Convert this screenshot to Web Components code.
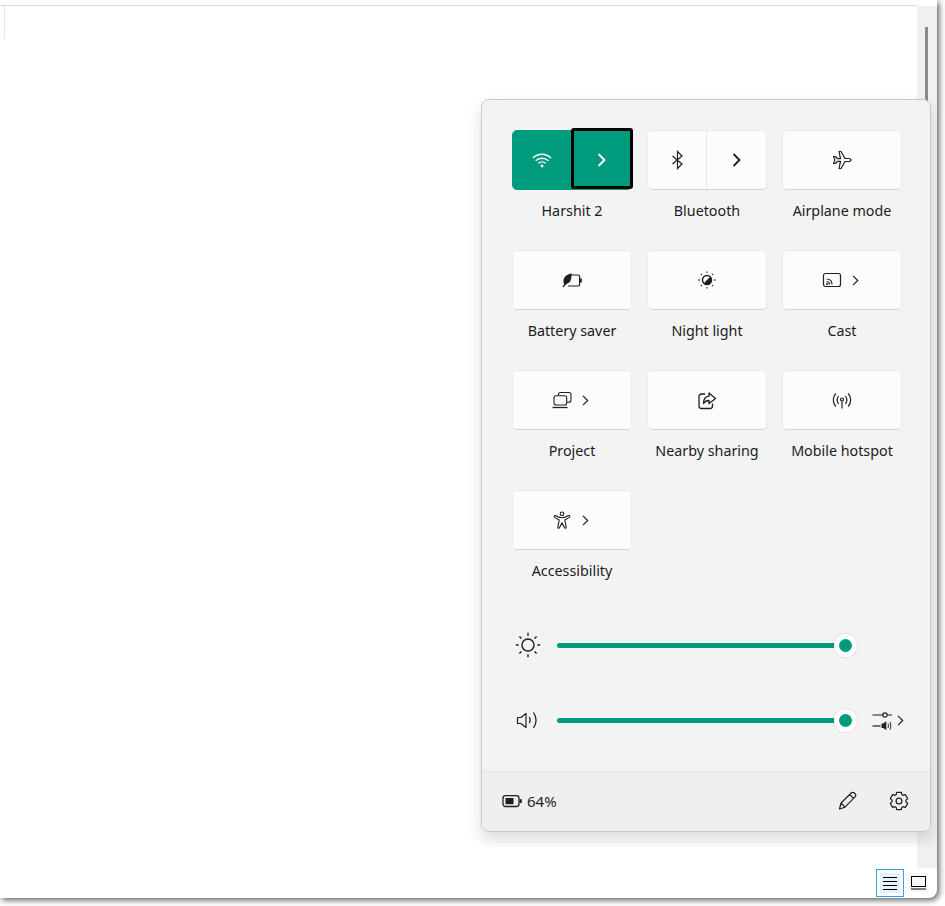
<!DOCTYPE html>
<html>
<head>
<meta charset="utf-8">
<title>Quick settings</title>
<style>
  html, body { margin: 0; height: 100%; background: #fff; overflow: hidden; }
  body { font-family: "Noto Sans", "Open Sans", sans-serif; color: #1b1b1b; }
</style>
</head>
<body>
<doc-window>
  <quick-settings>
    <qs-tile label="Harshit 2" active split focus><qs-icon name="wifi"></qs-icon></qs-tile>
    <qs-tile label="Bluetooth" split><qs-icon name="bluetooth"></qs-icon></qs-tile>
    <qs-tile label="Airplane mode"><qs-icon name="plane"></qs-icon></qs-tile>
    <qs-tile label="Battery saver"><qs-icon name="saver"></qs-icon></qs-tile>
    <qs-tile label="Night light"><qs-icon name="night"></qs-icon></qs-tile>
    <qs-tile label="Cast" more><qs-icon name="cast"></qs-icon></qs-tile>
    <qs-tile label="Project" more><qs-icon name="project"></qs-icon></qs-tile>
    <qs-tile label="Nearby sharing"><qs-icon name="share"></qs-icon></qs-tile>
    <qs-tile label="Mobile hotspot"><qs-icon name="hotspot"></qs-icon></qs-tile>
    <qs-tile label="Accessibility" more><qs-icon name="access"></qs-icon></qs-tile>
    <qs-slider slot="sliders"><qs-icon name="sun" size="26" box="24"></qs-icon></qs-slider>
    <qs-slider slot="sliders" mixer><qs-icon name="volume" size="24" box="24"></qs-icon></qs-slider>
  </quick-settings>
</doc-window>

<script>
// Engranaje de 6 dientes calculado en coordenadas polares
function gearPath() {
  const pt = (r, deg) => {
    const a = (deg - 90) * Math.PI / 180;
    return (10 + r * Math.cos(a)).toFixed(2) + ' ' + (10 + r * Math.sin(a)).toFixed(2);
  };
  let d = '';
  for (let i = 0; i < 6; i++) {
    const c = i * 60;
    d += (i ? 'L' : 'M') + pt(9, c - 15) + 'L' + pt(9, c + 15) + 'L' + pt(7, c + 24) + 'L' + pt(7, c + 36);
  }
  return d + 'Z';
}

// Iconos dibujados a mano, viewBox de 20x20 salvo que se indique otro
const ICONS = {
  wifi: '<path d="M1 8c5-5 13-5 18 0M3.600 10.700c3.600-3.300 9.200-3.300 12.800 0M6.300 13.300c2.100-1.700 5.300-1.700 7.400 0" stroke-width="1.300"/><circle cx="10" cy="16" r="1.400" fill="currentColor" stroke="none"/>',
  bluetooth: '<path d="M5.500 6 15 14l-4.500 4.500v-17L15 6l-9.500 8" stroke-width="1.200"/>',
  plane: '<path d="M1.500 6.500h2l2 2.200h3L7 1.500h2l4 7h3.500c1.500 0 2.500.7 2.500 1.500s-1 1.500-2.500 1.500H13l-4 7H7l1.500-7.200h-3l-2 2.200h-2L3 10z" stroke-width="1.200" stroke-linejoin="round"/>',
  saver: '<path d="M8 5h8c1 0 1.600.6 1.600 1.600v7.800c0 1-.6 1.600-1.600 1.600H6" stroke-width="1.200"/><path d="M18 8.500h1.800v4H18z" fill="currentColor" stroke="none"/><path d="M9.500 3.200C6 4.300 1 6 1.500 12c.1 1.200.5 2 1 2.700L8 12c1.500-3 1.700-6 1.500-8.800z" fill="currentColor" stroke="none"/><path d="M.8 17 6 11.500" stroke-width="1.100"/>',
  night: '<circle cx="10" cy="10" r="4.500" stroke-width="1.500"/><path d="M6.800 13.200a4.500 4.500 0 0 0 6.400-6.400z" fill="currentColor" stroke="none"/><path d="M10 1.500v1.300M10 17.200v1.300M1.500 10h1.300M17.200 10h1.300M4 4l.9.900M15.100 15.100l.9.900M4 16l.9-.9M15.100 4.900 16 4" stroke-width="1.300"/>',
  cast: '<rect x="1.500" y="3.500" width="17" height="13" rx="2" stroke-width="1.200"/><path d="M4.500 9c3.300 0 5.500 2.200 5.500 5.500M4.500 11.500c1.800 0 3 1.200 3 3" stroke-width="1.200"/><circle cx="5" cy="14" r="1" fill="currentColor" stroke="none"/>',
  project: '<path d="M6.500 5.500V4.500c0-1.200.8-2 2-2h8.500c1.200 0 2 .8 2 2v5.800c0 1.200-.8 2-2 2h-2.300" stroke-width="1.100"/><rect x="2" y="5.700" width="12.700" height="9.300" rx="2" stroke-width="1.100"/><path d="M.5 17.500h15" stroke-width="1.300"/>',
  share: '<path d="M8 4H4.500C3 4 2 5 2 6.500V16c0 1.500 1 2.500 2.500 2.500H13c1.500 0 2.500-1 2.500-2.500v-2.500" stroke-width="1.300"/><path d="M12 3l6.500 5.500L12 13.500v-3c-2.500 0-4.200 1-5.500 3 0-4 2-7 5.500-7.300z" stroke-width="1.300" stroke-linejoin="round"/>',
  hotspot: '<path d="M3.800 3.500c-3.300 3.500-3.300 9.500 0 13M16.200 3.500c3.300 3.500 3.300 9.500 0 13M6.600 6c-1.800 2.400-1.800 5.600 0 8M13.400 6c1.800 2.400 1.800 5.600 0 8M10 11v7.500" stroke-width="1.200"/><circle cx="10" cy="9.500" r="1.500" stroke-width="1.200"/>',
  access: '<circle cx="10" cy="3.800" r="1.800" stroke-width="1.100"/><path d="M2.900 5.600c-.9.300-1 1.300-.3 1.800L7.200 10l-1.400 7.200c-.2 1 1.200 1.500 1.600.6L10 13l2.600 4.800c.4.900 1.800.4 1.600-.6L12.800 10l4.600-2.600c.7-.5.600-1.500-.3-1.800-.4-.1-.7 0-1 .2C14.600 6.900 12.400 7.700 10 7.700S5.400 6.900 3.900 5.800c-.3-.2-.6-.3-1-.2z" stroke-width="1.100"/>',
  sun: '<circle cx="12" cy="12" r="5.600" stroke-width="1.300"/><path d="M12 .8v2.600M12 20.600v2.600M.8 12h2.600M20.600 12h2.600M4.100 4.100l1.800 1.800M18.100 18.100l1.800 1.800M4.100 19.900l1.800-1.800M18.100 5.900l1.800-1.800" stroke-width="1.300"/>',
  volume: '<path d="M2.500 9.500h3.500l5-4v14l-5-4H2.500z" stroke-width="1.200" stroke-linejoin="round"/><path d="M14.300 9c1 1.900 1 4.100 0 6M18.500 4.500c3.200 4.800 3.200 10.700 0 15.500" stroke-width="1.300"/>',
  mixer: '<path d="M.5 5h10.300M15.200 5h4.800" stroke-width="1.200"/><circle cx="13" cy="5" r="2.200" stroke-width="1.200"/><path d="M.5 16h8" stroke-width="1.200"/><path d="M9.500 13.500h1.800l3-2.300v9l-3-2.300H9.500z" fill="currentColor" stroke="none"/><path d="M16 13.500c.6 1.400.6 3.100 0 4.500M18 12c1 2.300 1 5.300 0 7.600" stroke-width="1"/>',
  battery: '<rect x="1" y="4.700" width="16" height="10.800" rx="2.500" stroke-width="1.300"/><rect x="3.500" y="7" width="8" height="6.200" fill="currentColor" stroke="none"/><path d="M17.600 8.200h2.200v3.800h-2.200z" fill="currentColor" stroke="none"/>',
  pencil: '<path d="M2.500 18 4 12 14.200 2c.9-.9 2.300-.9 3.200 0l.6.600c.9.900.9 2.300 0 3.200L8 16.200zM12.700 3.500l3.800 3.800M4 12l4 4.200" stroke-width="1.200" stroke-linejoin="round"/>',
  gear: '<path d="' + gearPath() + '" stroke-width="1.200" stroke-linejoin="round"/><circle cx="10" cy="10" r="2.900" stroke-width="1.200"/>',
  lines: '<path d="M3 4.500h14M3 8.500h14M3 12.500h14M3 16.500h14" stroke-width="1"/>',
  page: '<rect x="2.500" y="3.500" width="14" height="10" stroke-width="1"/><path d="M2 16h15" stroke-width="1"/>'
};

class QsIcon extends HTMLElement {
  constructor() {
    super();
    this.attachShadow({ mode: 'open' });
  }

  connectedCallback() {
    const size = this.getAttribute('size') || 20;
    const box = this.getAttribute('box') || 20;
    const name = this.getAttribute('name');
    this.shadowRoot.innerHTML = `
      <style>
        :host { display: inline-flex; width: ${size}px; height: ${size}px; flex: none; }
        svg { width: 100%; height: 100%; display: block; fill: none; stroke: currentColor; }
      </style>
      <svg viewBox="0 0 ${box} ${box}">${ICONS[name] || ''}</svg>`;
  }
}
customElements.define('qs-icon', QsIcon);

// Flecha ">" de los botones; grande en los divididos, pequena en los demas
class QsChevron extends HTMLElement {
  constructor() {
    super();
    this.attachShadow({ mode: 'open' });
  }

  connectedCallback() {
    const big = this.hasAttribute('big');
    this.shadowRoot.innerHTML = `
      <style>
        :host { display: inline-flex; flex: none; }
        svg { display: block; fill: none; stroke: currentColor; }
      </style>
      ${big
        ? '<svg width="9" height="14" viewBox="0 0 9 14" stroke-width="1.900"><path d="M1.500 1 7.500 7l-6 6"/></svg>'
        : '<svg width="7" height="11" viewBox="0 0 7 11" stroke-width="1.200"><path d="M1 .8 5.700 5.500 1 10.200"/></svg>'}`;
  }
}
customElements.define('qs-chevron', QsChevron);

class QsTile extends HTMLElement {
  constructor() {
    super();
    this.attachShadow({ mode: 'open' });
  }

  connectedCallback() {
    const split = this.hasAttribute('split');
    const more = this.hasAttribute('more');
    const label = this.getAttribute('label') || '';
    const inner = split
      ? `<span class="half"><slot></slot></span><span class="half right"><qs-chevron big></qs-chevron></span>`
      : `<span class="half ${more ? 'more' : ''}"><slot></slot>${more ? '<qs-chevron></qs-chevron>' : ''}</span>`;
    this.shadowRoot.innerHTML = `
      <style>
        :host { display: block; height: 120px; --accent: #009b7d; }
        .btn {
          display: flex; height: 60px; box-sizing: border-box;
          background: #fcfcfc; color: #1f1f1f;
          border: 1px solid #ececec; border-bottom-color: #d4d4d4;
          border-radius: 5px; position: relative;
        }
        .half { flex: 1; display: flex; align-items: center; justify-content: center; }
        .more { gap: 10px; padding-right: 4px; }
        .right { flex: 0 0 60px; box-sizing: border-box; border-left: 1px solid #e6e6e6; }
        :host([active]) .btn { background: var(--accent); border-color: var(--accent); color: #fff; }
        :host([active]) .right { border-left: 0; }
        .ring {
          position: absolute; left: 58px; top: -3px; width: 62px; height: 61px;
          box-sizing: border-box; border: 3px solid #000; border-radius: 3px;
        }
        .label { margin-top: 11px; text-align: center; font-size: 14.3px; line-height: 19px; color: #1c1c1c; white-space: nowrap; }
      </style>
      <div class="btn">${inner}${this.hasAttribute('focus') ? '<span class="ring"></span>' : ''}</div>
      <div class="label">${label}</div>`;
  }
}
customElements.define('qs-tile', QsTile);

class QsSlider extends HTMLElement {
  constructor() {
    super();
    this.attachShadow({ mode: 'open' });
  }

  connectedCallback() {
    const tail = this.hasAttribute('mixer')
      ? '<span class="tail"><qs-icon name="mixer"></qs-icon><qs-chevron></qs-chevron></span>'
      : '';
    this.shadowRoot.innerHTML = `
      <style>
        :host { display: flex; align-items: center; height: 30px; }
        .icon { width: 42px; margin-left: 7px; display: flex; color: #1f1f1f; }
        .track { width: 288px; height: 5px; border-radius: 3px; background: #009b7d; position: relative; }
        .thumb {
          position: absolute; right: -12px; top: -9px; width: 23px; height: 23px; border-radius: 50%;
          background: #fff; box-shadow: 0 0 2px rgba(0,0,0,.2);
          display: flex; align-items: center; justify-content: center;
        }
        .thumb::after { content: ""; width: 13px; height: 13px; border-radius: 50%; background: #009b7d; }
        .tail { margin-left: 27px; display: flex; align-items: center; gap: 5px; color: #1f1f1f; }
      </style>
      <span class="icon"><slot></slot></span>
      <div class="track"><span class="thumb"></span></div>
      ${tail}`;
  }
}
customElements.define('qs-slider', QsSlider);

class QuickSettings extends HTMLElement {
  constructor() {
    super();
    this.attachShadow({ mode: 'open' });
    this.shadowRoot.innerHTML = `
      <style>
        :host {
          display: flex; flex-direction: column; position: absolute; left: 481px; top: 99px;
          width: 450px; height: 733px; box-sizing: border-box;
          background: #f3f3f3; border: 1px solid #c9c9c9; border-radius: 8px;
          box-shadow: 0 8px 16px rgba(0,0,0,.14); overflow: hidden;
        }
        .grid { display: grid; grid-template-columns: repeat(3, 120px); column-gap: 15px; padding: 30px 0 0 30px; height: 480px; box-sizing: border-box; }
        .sliders { display: flex; flex-direction: column; gap: 45px; margin-top: 50px; padding-left: 26px; }
        footer {
          margin-top: auto; height: 60px; box-sizing: border-box; background: #efefef; border-top: 1px solid #e3e3e3;
          display: flex; align-items: center; padding: 0 20px 2px; color: #1f1f1f; font-size: 15px;
        }
        .batt { display: flex; align-items: center; gap: 5px; }
        .spacer { flex: 1; }
        .tools { display: flex; gap: 32px; margin-right: 1px; }
      </style>
      <div class="grid"><slot></slot></div>
      <div class="sliders"><slot name="sliders"></slot></div>
      <footer>
        <span class="batt"><qs-icon name="battery"></qs-icon><span>64%</span></span>
        <span class="spacer"></span>
        <span class="tools"><qs-icon name="pencil"></qs-icon><qs-icon name="gear"></qs-icon></span>
      </footer>`;
  }
}
customElements.define('quick-settings', QuickSettings);

class DocWindow extends HTMLElement {
  constructor() {
    super();
    this.attachShadow({ mode: 'open' });
    this.shadowRoot.innerHTML = `
      <style>
        :host {
          display: grid; grid-template-rows: 1fr 8px; grid-template-columns: 1fr 8px;
          width: 945px; height: 906px; background: #fff;
        }
        .win {
          background: #fff; display: flex; flex-direction: column;
          border-radius: 0 0 8px 0; overflow: hidden; box-shadow: 2px 2px 6px rgba(0,0,0,.65);
          position: relative; grid-column: 1; grid-row: 1;
        }
        .doc { height: 847px; display: grid; grid-template-columns: 1fr 20px; position: relative; overflow: hidden; }
        .page { border-top: 1px solid #dcdcdc; margin-top: 5px; }
        .mark { display: block; width: 1px; height: 33px; margin-left: 4px; background: #e6e6e6; }
        .track { background: #f0f0f0; margin-top: 6px; padding-left: 8px; }
        .thumb { display: block; width: 3px; height: 100px; margin-top: 21px; background: #8a8a8a; }
        .status { flex: 1; position: relative; display: flex; justify-content: flex-end; align-items: flex-end; gap: 4px; padding-right: 9px; padding-bottom: 1px; }
        .status::after { content: ""; position: absolute; right: 0; top: 0; width: 20px; height: 21px; background: #f0f0f0; }
        .view { width: 28px; height: 28px; box-sizing: border-box; display: flex; align-items: center; justify-content: center; color: #000; }
        .view.on { border: 1px solid #36a3e0; }
        .view.on span { width: 20px; height: 20px; background: #e5f1fb; display: flex; align-items: center; justify-content: center; }
        .view.off { width: 20px; height: 19px; margin-bottom: 5px; background: #f7f7f7; }
      </style>
      <div class="win">
        <div class="doc">
          <div class="page"><span class="mark"></span></div>
          <div class="track"><span class="thumb"></span></div>
          <slot></slot>
        </div>
        <div class="status">
          <div class="view on"><span><qs-icon name="lines" size="20" box="20"></qs-icon></span></div>
          <div class="view off"><qs-icon name="page" size="19" box="19"></qs-icon></div>
        </div>
      </div>`;
  }
}
customElements.define('doc-window', DocWindow);
</script>
</body>
</html>
